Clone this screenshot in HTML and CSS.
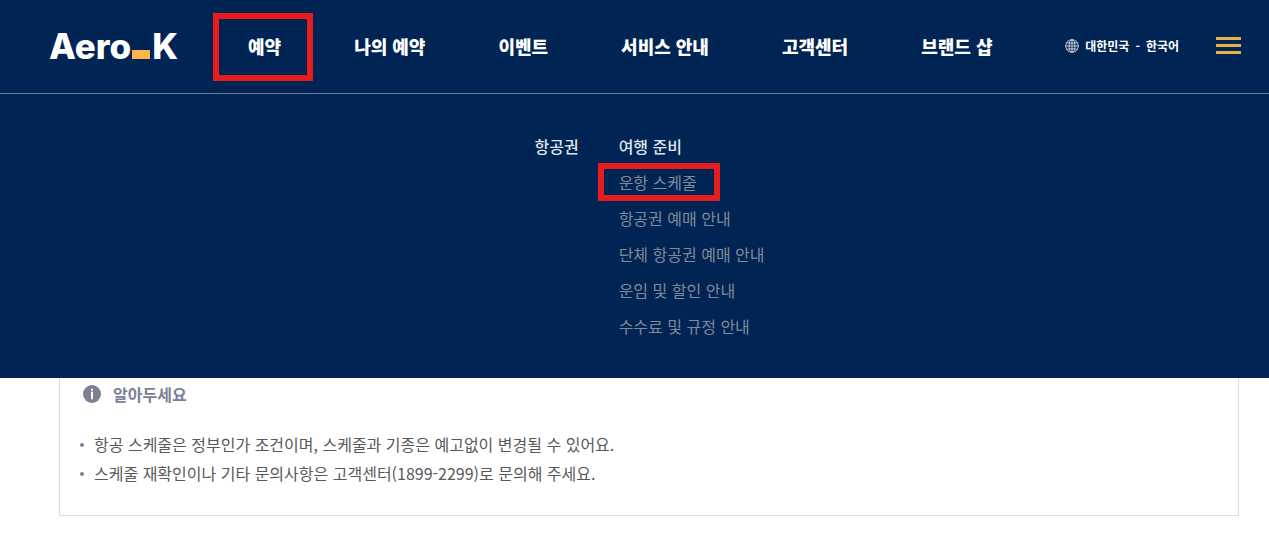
FILE: index.html
```html
<!DOCTYPE html>
<html lang="ko">
<head>
<meta charset="utf-8">
<meta name="viewport" content="width=device-width, initial-scale=1">
<title>Aero K</title>
<link rel="stylesheet" href="styles.css">
</head>
<body>
<header class="site-header">
  <div class="topbar">
    <a class="logo" href="#"><span>Aero</span><span class="logo-block"></span><span>K</span></a>
    <nav class="main-nav">
      <a class="marked" href="#">예약</a>
      <a href="#">나의 예약</a>
      <a href="#">이벤트</a>
      <a href="#">서비스 안내</a>
      <a href="#">고객센터</a>
      <a href="#">브랜드 샵</a>
    </nav>
    <button class="language" type="button">
      <svg class="globe" viewBox="0 0 14 14" aria-hidden="true">
        <circle cx="7" cy="7" r="6.3"/>
        <ellipse cx="7" cy="7" rx="3" ry="6.3"/>
        <path d="M7 .7v12.6M.7 7h12.6M1.7 3.7Q7 5 12.3 3.7M1.7 10.3Q7 9 12.3 10.3"/>
      </svg>
      <span>대한민국</span><span>-</span><span>한국어</span>
    </button>
    <button class="menu-button" type="button" aria-label="전체 메뉴"><span></span><span></span><span></span></button>
  </div>
  <div class="submenu">
    <a class="submenu-title" href="#">항공권</a>
    <div class="submenu-column">
      <a class="submenu-title" href="#">여행 준비</a>
      <a class="marked marked-item" href="#">운항 스케줄</a>
      <a href="#">항공권 예매 안내</a>
      <a href="#">단체 항공권 예매 안내</a>
      <a href="#">운임 및 할인 안내</a>
      <a href="#">수수료 및 규정 안내</a>
    </div>
  </div>
</header>
<main class="page">
  <section class="notice">
    <h2 class="notice-title">
      <svg class="info" viewBox="0 0 18 18" aria-hidden="true">
        <circle cx="9" cy="9" r="9"/>
        <path d="M8 3.8h2v2H8zM8 6.8h2v7.4H8z"/>
      </svg>
      알아두세요
    </h2>
    <ul class="notice-list">
      <li>항공 스케줄은 정부인가 조건이며, 스케줄과 기종은 예고없이 변경될 수 있어요.</li>
      <li>스케줄 재확인이나 기타 문의사항은 고객센터(1899-2299)로 문의해 주세요.</li>
    </ul>
  </section>
</main>
</body>
</html>
```
FILE: styles.css
```css
* {
  box-sizing: border-box;
}

body {
  margin: 0;
  background: #fff;
  color: #58595b;
  font-family: "Noto Sans CJK KR", sans-serif;
  font-size: 16px;
}

a {
  color: inherit;
  text-decoration: none;
  white-space: nowrap;
}

button {
  padding: 0;
  border: 0;
  background: none;
  color: inherit;
  font: inherit;
}

.site-header {
  background: #002554;
  color: #fff;
}

.topbar {
  display: flex;
  align-items: center;
  height: 94px;
  padding: 0 28px 2px 49px;
  border-bottom: 1px solid #6f8193;
}

.logo {
  display: flex;
  flex: none;
  align-items: baseline;
  width: 127px;
  font-family: Inter, sans-serif;
  font-size: 35px;
  font-weight: 800;
  line-height: 40px;
}

.logo-block {
  flex: none;
  width: 18px;
  height: 9px;
  margin: 0 2px 0 1px;
  background: #ffb549;
}

.main-nav {
  display: flex;
  gap: 73px;
  margin-left: 72px;
  font-size: 18px;
  font-weight: 900;
  line-height: 26px;
}

.marked {
  position: relative;
}

.marked::after {
  content: "";
  position: absolute;
  inset: -20px -32px -22px -35px;
  border: 6px solid #e71d1d;
}

.submenu-column .marked-item::after {
  inset: -1px -23px -1px -21px;
}

.language {
  display: flex;
  align-items: center;
  gap: 6px;
  margin-left: auto;
  font-size: 12px;
  font-weight: 700;
  white-space: nowrap;
}

.globe {
  width: 14px;
  height: 14px;
  fill: none;
  stroke: #d5dce4;
  stroke-width: 0.9;
}

.menu-button {
  display: flex;
  flex-direction: column;
  gap: 4px;
  width: 25px;
  margin-left: 37px;
}

.menu-button span {
  width: 100%;
  height: 3px;
  background: #e5b248;
}

.submenu {
  display: flex;
  justify-content: center;
  gap: 40px;
  padding: 34px 0 34px 30px;
  line-height: 36px;
}

.submenu-column {
  display: flex;
  flex-direction: column;
  align-items: flex-start;
  color: #808a97;
}

.submenu .submenu-title {
  color: #dfe4ea;
  font-weight: 500;
}

.page {
  padding: 0 30px 30px 59px;
}

.notice {
  padding: 4px 20px 27px;
  border: 1px solid #dcdcdc;
  border-top: 0;
}

.notice-title {
  display: flex;
  align-items: center;
  gap: 12px;
  margin: 0 0 24px;
  padding-left: 3px;
  color: #7b8194;
  font-size: 16px;
  font-weight: 700;
  line-height: 24px;
}

.info {
  width: 18px;
  height: 18px;
  fill: #7b8194;
}

.info path {
  fill: #fff;
}

.notice-list {
  margin: 0;
  padding: 0;
  list-style: none;
  line-height: 29px;
}

.notice-list li {
  display: flex;
  align-items: center;
  gap: 10px;
}

.notice-list li::before {
  content: "";
  flex: none;
  width: 4px;
  height: 4px;
  border-radius: 50%;
  background: #7b8194;
}
```
